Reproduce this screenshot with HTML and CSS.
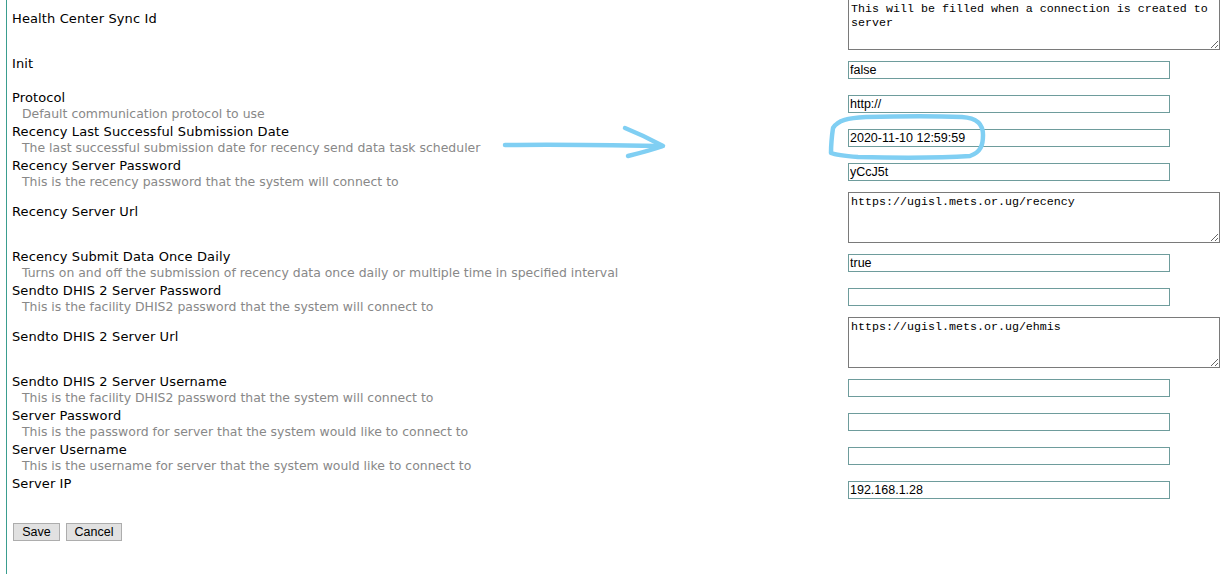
FILE: index.html
```html
<!DOCTYPE html>
<html>
<head>
<meta charset="utf-8">
<title>Settings</title>
<link rel="stylesheet" href="styles.css">
</head>
<body>
<div class="page">
  <form class="settings">
    <div class="row tall">
      <div class="label"><div class="name">Health Center Sync Id</div><div class="desc"></div></div>
      <div class="field"><textarea class="area">This will be filled when a connection is created to server</textarea></div>
    </div>
    <div class="row">
      <div class="label"><div class="name">Init</div><div class="desc"></div></div>
      <div class="field"><input class="text" type="text" value="false"></div>
    </div>
    <div class="row">
      <div class="label"><div class="name">Protocol</div><div class="desc">Default communication protocol to use</div></div>
      <div class="field"><input class="text" type="text" value="http://"></div>
    </div>
    <div class="row">
      <div class="label"><div class="name">Recency Last Successful Submission Date</div><div class="desc">The last successful submission date for recency send data task scheduler</div></div>
      <div class="field"><input class="text" type="text" value="2020-11-10 12:59:59"></div>
    </div>
    <div class="row">
      <div class="label"><div class="name">Recency Server Password</div><div class="desc">This is the recency password that the system will connect to</div></div>
      <div class="field"><input class="text" type="text" value="yCcJ5t"></div>
    </div>
    <div class="row tall">
      <div class="label"><div class="name">Recency Server Url</div><div class="desc"></div></div>
      <div class="field"><textarea class="area">https://ugisl.mets.or.ug/recency</textarea></div>
    </div>
    <div class="row">
      <div class="label"><div class="name">Recency Submit Data Once Daily</div><div class="desc">Turns on and off the submission of recency data once daily or multiple time in specified interval</div></div>
      <div class="field"><input class="text" type="text" value="true"></div>
    </div>
    <div class="row">
      <div class="label"><div class="name">Sendto DHIS 2 Server Password</div><div class="desc">This is the facility DHIS2 password that the system will connect to</div></div>
      <div class="field"><input class="text" type="text" value=""></div>
    </div>
    <div class="row tall">
      <div class="label"><div class="name">Sendto DHIS 2 Server Url</div><div class="desc"></div></div>
      <div class="field"><textarea class="area">https://ugisl.mets.or.ug/ehmis</textarea></div>
    </div>
    <div class="row">
      <div class="label"><div class="name">Sendto DHIS 2 Server Username</div><div class="desc">This is the facility DHIS2 password that the system will connect to</div></div>
      <div class="field"><input class="text" type="text" value=""></div>
    </div>
    <div class="row">
      <div class="label"><div class="name">Server Password</div><div class="desc">This is the password for server that the system would like to connect to</div></div>
      <div class="field"><input class="text" type="text" value=""></div>
    </div>
    <div class="row">
      <div class="label"><div class="name">Server Username</div><div class="desc">This is the username for server that the system would like to connect to</div></div>
      <div class="field"><input class="text" type="text" value=""></div>
    </div>
    <div class="row">
      <div class="label"><div class="name">Server IP</div><div class="desc"></div></div>
      <div class="field"><input class="text" type="text" value="192.168.1.28"></div>
    </div>
    <div class="actions">
      <button type="button" class="btn save">Save</button>
      <button type="button" class="btn cancel">Cancel</button>
    </div>
  </form>
</div>
<svg class="annotation" width="1222" height="574" viewBox="0 0 1222 574" xmlns="http://www.w3.org/2000/svg">
  <g fill="none" stroke="#80cff3" stroke-width="4.5" stroke-linecap="round" stroke-linejoin="round">
    <path d="M505,145 C560,144 610,145 662,146"/>
    <path d="M625,128 C640,134 652,140 663,146 C652,150 640,153 628,156"/>
    <path d="M833,128 C838,120 848,118 866,117 C900,116 940,116 962,117 C978,118 983,125 983,135 C983,145 981,152 970,156 C940,158 900,158 858,157 C846,156 836,155 831,153 C831,145 832,135 833,128"/>
  </g>
</svg>
</body>
</html>
```

FILE: styles.css
```css
html, body {
  margin: 0;
  padding: 0;
  background: #ffffff;
}

body {
  width: 1222px;
  height: 574px;
  overflow: hidden;
  position: relative;
}

.page {
  margin: -4px 0 0 6px;
  border-left: 1px solid #3a9d8f;
  padding-left: 5px;
  min-height: 590px;
}

.settings {
  display: flex;
  flex-direction: column;
}

.row {
  display: grid;
  grid-template-columns: 836px 1fr;
  align-items: center;
  height: 34px;
}

.row.tall {
  height: 57px;
}

.label {
  font-family: "DejaVu Sans", Verdana, sans-serif;
  line-height: 15px;
  padding-top: 3px;
}

.name {
  color: #000;
  font-size: 13px;
  letter-spacing: 0.12px;
  white-space: nowrap;
}

.desc {
  color: #888;
  font-size: 12.45px;
  padding: 1px 0 0 10px;
  min-height: 15px;
  white-space: nowrap;
}

.field {
  display: flex;
  align-items: center;
}

.text {
  box-sizing: border-box;
  width: 322px;
  height: 18px;
  margin: 0;
  padding: 0 1px;
  border: 1px solid #6e9c9c;
  font-family: "Liberation Sans", Arial, sans-serif;
  font-size: 12.5px;
  color: #000;
  background: #fff;
  outline: none;
}

.area {
  box-sizing: border-box;
  width: 372px;
  height: 51px;
  margin: 0;
  padding: 2px 2px 1px;
  border: 1px solid #7a7a7a;
  font-family: "Liberation Mono", "Courier New", monospace;
  font-size: 11.67px;
  line-height: 14px;
  color: #000;
  background: #fff;
  resize: both;
  overflow: hidden;
  outline: none;
}

.actions {
  display: flex;
  gap: 6px;
  margin-top: 16px;
  padding-left: 1px;
}

.btn {
  box-sizing: border-box;
  height: 18px;
  margin: 0;
  padding: 0;
  border: 1px solid #adadad;
  background: #e1e1e1;
  font-family: "Liberation Sans", Arial, sans-serif;
  font-size: 12.5px;
  line-height: 16px;
  color: #000;
  border-radius: 0;
}

.btn.save {
  width: 47px;
}

.btn.cancel {
  width: 56px;
}

.annotation {
  position: absolute;
  top: 0;
  left: 0;
  pointer-events: none;
}
```
